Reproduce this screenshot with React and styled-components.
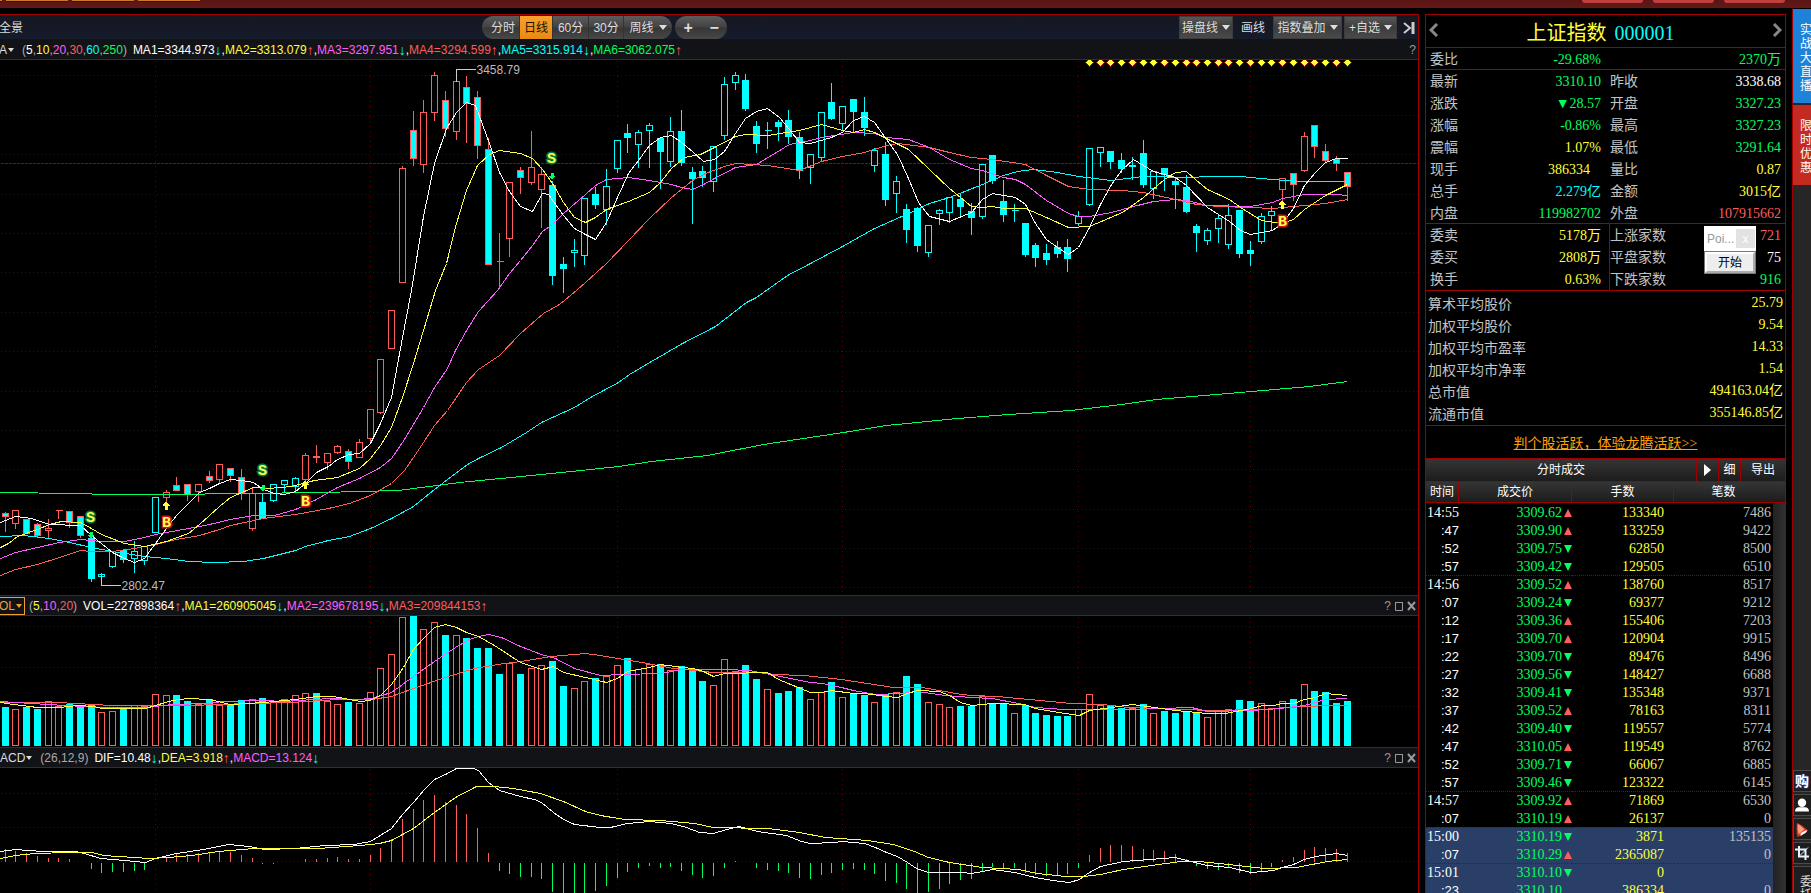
import React from 'react';
import styled, { createGlobalStyle, css } from 'styled-components';

const color = {
  up: '#ff5c5c',
  down: '#00ff5f',
  cyan: '#00ffff',
  yellow: '#ffff3c',
  magenta: '#ff5cff',
  white: '#ffffff',
  label: '#c4c4c4',
  line: '#a00000',
  grid: '#5e0000',
};

const sans = '"Liberation Sans", "Noto Sans CJK SC", sans-serif';
const serif = '"Liberation Serif", "Noto Sans CJK SC", serif';

const GlobalStyle = createGlobalStyle`
  * { box-sizing: border-box; }
  body { margin: 0; background: #000; overflow: hidden; }
  button { font: inherit; color: inherit; background: none; border: 0; padding: 0; margin: 0; cursor: pointer; }
`;

/* ---------- data ---------- */

// high, body top, body bottom, low, kind
// r: hollow red, m: red outline filled cyan, c: hollow cyan, f: solid cyan
const candles = [
  [511, 513, 516, 531, 'm'], [509, 510, 523, 528, 'r'], [519, 519, 533, 533, 'm'], [522, 524, 535, 537, 'm'],
  [518, 528, 530, 538, 'r'], [509, 510, 510, 518, 'r'], [511, 511, 522, 527, 'm'], [516, 516, 535, 537, 'm'],
  [535, 538, 578, 581, 'f'], [572, 574, 576, 585, 'c'], [551, 551, 566, 567, 'c'], [549, 550, 559, 562, 'f'],
  [540, 551, 558, 572, 'c'], [545, 546, 560, 564, 'c'], [496, 497, 532, 532, 'c'], [489, 492, 497, 501, 'r'],
  [476, 485, 490, 490, 'm'], [484, 484, 494, 500, 'm'], [484, 484, 491, 501, 'r'], [470, 476, 480, 482, 'm'],
  [464, 464, 479, 482, 'r'], [468, 468, 475, 481, 'm'], [468, 477, 493, 499, 'm'], [487, 493, 528, 530, 'r'],
  [492, 502, 518, 518, 'f'], [484, 484, 500, 501, 'c'], [480, 480, 484, 492, 'c'], [476, 478, 486, 491, 'c'],
  [452, 455, 479, 481, 'r'], [444, 456, 457, 462, 'r'], [453, 453, 462, 469, 'r'], [444, 446, 452, 453, 'r'],
  [448, 451, 461, 468, 'm'], [438, 442, 457, 457, 'r'], [409, 409, 438, 442, 'r'], [358, 359, 412, 413, 'r'],
  [310, 310, 348, 348, 'r'], [165, 168, 282, 282, 'r'], [110, 130, 158, 165, 'm'], [99, 112, 164, 172, 'r'],
  [71, 75, 112, 120, 'r'], [90, 100, 128, 136, 'm'], [69, 81, 131, 139, 'r'], [75, 87, 103, 142, 'm'],
  [90, 97, 145, 158, 'm'], [137, 149, 264, 264, 'm'], [232, 261, 261, 287, 'r'], [182, 182, 238, 256, 'r'],
  [166, 170, 177, 193, 'm'], [130, 167, 182, 184, 'r'], [166, 174, 189, 227, 'r'], [180, 185, 275, 284, 'f'],
  [256, 264, 268, 292, 'f'], [238, 250, 252, 266, 'c'], [198, 198, 255, 264, 'c'], [186, 194, 204, 208, 'f'],
  [168, 186, 209, 224, 'c'], [140, 140, 168, 172, 'c'], [123, 133, 137, 152, 'f'], [129, 132, 144, 167, 'c'],
  [122, 125, 130, 167, 'c'], [136, 138, 151, 188, 'f'], [116, 131, 161, 166, 'c'], [109, 131, 162, 165, 'f'],
  [166, 172, 178, 223, 'f'], [165, 171, 177, 186, 'f'], [146, 146, 181, 191, 'c'], [76, 84, 135, 139, 'c'],
  [71, 75, 82, 89, 'c'], [73, 80, 108, 110, 'f'], [120, 126, 143, 152, 'f'], [121, 130, 130, 148, 'f'],
  [119, 122, 126, 140, 'f'], [109, 120, 136, 143, 'f'], [131, 137, 170, 178, 'f'], [154, 154, 167, 183, 'c'],
  [111, 112, 157, 161, 'c'], [82, 102, 118, 119, 'f'], [106, 106, 123, 129, 'c'], [99, 99, 111, 132, 'f'],
  [96, 112, 127, 135, 'f'], [147, 150, 165, 171, 'c'], [141, 154, 199, 205, 'f'], [175, 181, 193, 212, 'c'],
  [203, 209, 229, 242, 'f'], [206, 208, 245, 251, 'f'], [224, 225, 252, 256, 'c'], [208, 210, 213, 224, 'c'],
  [196, 197, 212, 222, 'c'], [193, 199, 206, 216, 'f'], [202, 211, 217, 234, 'f'], [164, 164, 216, 218, 'c'],
  [155, 155, 180, 183, 'f'], [179, 201, 214, 221, 'f'], [203, 210, 210, 221, 'f'], [222, 223, 254, 256, 'f'],
  [242, 245, 257, 266, 'f'], [243, 253, 259, 264, 'f'], [240, 247, 253, 257, 'f'], [238, 247, 258, 271, 'f'],
  [210, 216, 223, 225, 'c'], [148, 148, 204, 205, 'c'], [146, 147, 152, 166, 'c'], [151, 151, 161, 168, 'f'],
  [152, 160, 168, 172, 'f'], [156, 165, 166, 179, 'f'], [139, 153, 184, 187, 'f'], [171, 171, 188, 198, 'c'],
  [168, 168, 174, 190, 'f'], [177, 181, 184, 208, 'f'], [174, 187, 211, 212, 'f'], [223, 226, 232, 251, 'f'],
  [227, 230, 240, 244, 'c'], [214, 218, 228, 242, 'c'], [203, 215, 244, 248, 'c'], [210, 210, 253, 257, 'f'],
  [240, 250, 253, 265, 'f'], [212, 216, 241, 243, 'c'], [205, 211, 215, 230, 'c'], [178, 178, 189, 200, 'r'],
  [173, 173, 184, 200, 'm'], [131, 136, 170, 171, 'r'], [125, 125, 146, 157, 'm'], [143, 151, 160, 161, 'm'],
  [155, 159, 163, 170, 'm'], [172, 172, 186, 200, 'm'],
];

// tops of the volume bars in thirds of a pixel; f marks a falling day
const volumes = `351f 358 351f 357f 334 349 342f 345f 345f 367 364 355f 346 347 313 316 315f 333f 343 328f 345 343f 331f 328
 324f 337 328 316 310 309f 334 343 336f 340 307 235 193 82 75f 118 97 135f 136 144f 174f 174f 252f 219 252f 235 226 213f
 288f 295 273 264f 259 226 204f 236 222 223f 241 228f 243f 273f 286 208 242 225f 267f 298 309f 303f 291f 328 306 276f
 322 312f 315f 337 312f 307 258f 282f 337 343 352 348f 348f 318 340f 340f 370 344f 369f 375f 378f 378f 358 313 346 348f
 354f 354 342f 370 363f 369f 365f 368f 382 364 358 330f 333f 340 355 334 327f 283 303f 306f 339f 333f`
  .split(/\s+/)
  .map((v) => ({ top: 590 + Math.round(parseInt(v, 10) / 3), falling: v.endsWith('f') }));

// ends of the MACD sticks in thirds of a pixel, 814 is the zero line
const macd = `775 780 786 795 801 801 804 814 834 846 843 843 840 837 814 798 789 788 786 784 780 783 792 801 819 819 814 814
 804 804 801 798 804 804 792 771 744 684 654 627 612 633 642 669 711 786 840 849 858 858 864 903 929 939 929 900 885 861
 843 831 825 831 828 840 852 861 855 831 810 814 831 837 840 846 861 864 852 846 837 834 837 849 870 876 894 906 903 894
 879 867 864 843 828 831 831 846 852 855 852 849 831 792 771 762 762 765 774 777 780 789 804 825 834 837 831 846 849 840
 828 807 798 777 768 771 774 786`
  .split(/\s+/)
  .map((v) => 590 + Math.round(parseInt(v, 10) / 3));

const priceLines = [
  [color.down, '0,492 75,493 107,494 166,494 321,492 398,490 459,482 541,474 590,469 618,466 651,461 707,455 763,444 843,432 886,425 957,418 1008,414 1070,410 1121,404 1156,399 1251,391 1309,386 1347,381'],
  [color.cyan, '0,536 23,535 49,538 69,542 91,547 112,551 144,556 166,558 188,561 214,562 243,561 263,558 295,550 305,546 328,540 349,536 370,528 391,518 413,506 434,489 455,473 467,464 478,458 501,447 526,432 541,422 574,407 590,397 618,382 629,374 651,361 682,343 715,326 746,302 756,297 787,275 810,263 842,246 874,228 908,213 929,203 949,197 982,184 1003,175 1017,171 1033,169 1057,172 1078,176 1111,180 1143,176 1191,177 1207,176 1240,176 1260,178 1297,181 1347,181'],
  [color.up, '0,575 15,569 37,564 59,557 80,550 91,551 112,551 134,548 155,544 176,539 199,535 219,529 230,525 263,518 295,514 328,508 349,503 370,495 391,483 404,470 413,457 423,442 434,425 447,410 466,382 478,369 499,355 520,333 543,313 559,304 576,290 585,282 606,263 628,240 649,218 671,197 692,180 705,173 724,166 735,163 767,165 799,170 821,161 842,156 864,152 886,145 897,143 929,147 949,152 971,157 992,159 1025,164 1046,175 1068,186 1089,189 1122,190 1143,192 1175,199 1196,204 1218,206 1250,207 1272,208 1304,205 1325,203 1347,199'],
  [color.magenta, '0,558 15,552 37,547 59,542 80,539 101,541 124,541 144,537 155,534 188,528 209,524 230,519 253,515 274,515 295,509 316,499 337,487 359,478 380,467 391,458 402,442 413,424 423,407 434,387 447,368 455,350 466,330 478,311 497,290 509,273 520,260 532,245 542,231 552,224 563,213 585,194 595,185 606,179 628,177 649,180 671,184 681,187 692,189 703,184 714,178 735,167 756,164 789,144 810,140 821,137 853,132 874,133 886,137 908,139 929,147 949,159 971,168 982,170 1003,177 1015,179 1025,184 1046,200 1068,213 1078,216 1089,216 1111,212 1133,206 1153,201 1175,199 1186,200 1207,205 1250,206 1272,202 1282,198 1304,194 1336,194 1347,195'],
  [color.yellow, '0,547 8,543 17,536 37,529 49,524 61,521 80,522 91,528 101,534 124,543 144,546 166,541 188,533 199,524 219,506 230,497 253,487 268,488 291,486 314,480 337,477 359,468 370,458 380,445 391,427 402,397 413,363 423,330 435,290 446,263 456,223 466,190 477,165 489,154 499,150 520,153 532,158 542,169 552,183 563,202 574,217 585,222 595,217 606,209 628,201 649,192 660,182 671,168 684,157 700,154 714,147 735,136 745,134 767,135 799,130 821,124 842,130 853,132 864,129 874,132 886,138 908,149 929,169 949,188 971,206 982,207 992,206 1003,208 1025,208 1046,217 1068,227 1089,226 1122,212 1143,197 1164,179 1175,172 1186,171 1196,180 1207,189 1229,199 1240,207 1261,220 1282,223 1293,219 1304,209 1325,195 1347,184'],
  [color.white, '0,522 15,516 31,518 49,524 80,525 91,535 112,552 124,558 134,562 144,558 155,543 166,528 176,515 188,503 199,492 209,488 219,483 230,479 241,480 253,482 263,489 274,493 284,494 295,491 305,483 316,472 328,466 337,459 349,454 359,453 370,443 380,423 391,397 402,337 411,290 423,216 434,163 446,128 456,112 466,102 475,105 489,143 499,172 509,191 520,206 532,211 542,193 548,194 563,215 574,228 585,234 595,239 606,222 617,197 628,173 638,160 649,145 660,137 671,135 681,142 692,151 703,161 714,159 724,151 735,133 745,118 756,111 767,108 779,117 789,129 799,142 810,143 831,137 842,132 853,120 864,116 874,122 886,139 897,154 908,178 918,202 929,216 949,221 971,212 982,199 992,193 1015,197 1025,204 1035,223 1046,239 1057,247 1068,254 1078,247 1089,227 1100,204 1111,184 1122,169 1133,159 1153,171 1175,177 1186,185 1207,207 1229,221 1240,230 1250,234 1261,232 1272,230 1282,223 1293,208 1304,185 1315,172 1325,162 1336,158 1347,158'],
];

const volumeLines = [
  [color.up, '0,702 57,702 111,705 188,705 249,703 291,702 337,699 371,699 391,696 413,688 445,677 474,668 497,664 520,661 551,656 585,653 600,655 617,658 647,663 673,668 713,672 762,672 773,674 804,675 841,679 893,687 922,687 961,694 971,695 997,696 1071,703 1102,704 1128,707 1186,709 1207,710 1262,709 1285,707 1327,705 1347,705'],
  [color.magenta, '0,701 31,703 65,705 101,707 145,707 172,704 207,703 222,701 264,700 283,701 329,698 356,699 371,698 391,692 413,676 434,661 455,647 469,639 478,636 488,634 501,637 520,646 541,654 555,658 574,668 600,675 621,674 660,673 682,669 705,669 726,669 749,670 780,676 810,682 822,683 841,687 853,690 875,694 901,693 917,691 945,695 971,697 992,698 1018,703 1035,707 1063,709 1132,709 1191,707 1207,711 1251,710 1280,708 1304,705 1325,699 1347,698'],
  [color.yellow, '0,702 13,704 37,707 59,707 77,705 94,706 101,708 145,708 155,705 172,700 188,698 209,699 230,704 263,702 295,699 316,696 333,696 360,701 369,700 380,695 391,684 403,667 413,649 424,637 434,627 445,624 456,627 466,632 478,636 494,645 520,662 541,669 553,666 563,672 585,677 606,682 617,678 627,671 649,667 660,664 682,667 693,668 703,671 713,676 724,673 767,672 778,679 810,692 821,692 831,690 853,693 864,693 886,696 897,697 907,693 917,690 939,691 949,695 960,702 971,705 992,703 1024,704 1035,708 1058,712 1079,715 1089,710 1111,707 1132,704 1154,707 1175,710 1207,713 1225,713 1251,708 1262,705 1273,705 1282,703 1293,703 1304,699 1315,697 1325,693 1347,695'],
];

const macdLines = [
  [color.white, '0,851 15,849 42,851 75,851 84,853 100,858 124,860 145,862 155,858 176,853 203,849 228,844 249,846 264,849 295,848 325,845 354,844 370,841 391,828 402,814 413,802 424,789 434,779 445,774 456,768 473,768 478,770 488,782 499,790 520,796 534,799 541,802 553,812 563,819 574,824 600,827 610,827 627,823 649,821 671,823 686,827 699,832 713,833 726,829 739,826 757,831 786,835 801,841 810,843 833,842 842,841 864,843 875,847 886,852 897,856 907,862 916,868 928,872 961,872 971,873 982,871 992,869 1014,872 1035,877 1052,880 1069,882 1079,879 1089,872 1100,866 1123,861 1149,859 1175,857 1194,862 1207,865 1229,867 1251,872 1273,870 1282,867 1293,864 1304,859 1315,856 1336,853 1347,855'],
  [color.yellow, '0,858 15,855 34,853 69,852 92,852 103,855 149,858 168,857 191,855 218,851 253,848 318,848 360,845 379,843 391,840 413,828 434,812 455,797 476,786 494,786 513,788 540,793 563,801 585,811 600,815 624,819 660,820 694,823 713,827 767,828 799,832 825,837 867,840 893,844 914,851 928,857 949,862 982,867 1018,869 1037,873 1065,876 1084,876 1100,874 1123,869 1144,866 1180,861 1199,861 1228,864 1264,868 1296,867 1327,861 1347,859'],
];

const monthMarks = [155, 370, 617, 842, 1078, 1250];

const quoteRows = [
  ['最新', '3310.10', 'down', '昨收', '3338.68', 'white'],
  ['涨跌', '▼28.57', 'down', '开盘', '3327.23', 'down'],
  ['涨幅', '-0.86%', 'down', '最高', '3327.23', 'down'],
  ['震幅', '1.07%', 'yellow', '最低', '3291.64', 'down'],
  ['现手', '386334', 'yellow', '量比', '0.87', 'yellow'],
  ['总手', '2.279亿', 'cyan', '金额', '3015亿', 'yellow'],
  ['内盘', '119982702', 'down', '外盘', '107915662', 'up'],
];

const breadthRows = [
  ['委卖', '5178万', 'yellow', '上涨家数', '721', 'up'],
  ['委买', '2808万', 'yellow', '平盘家数', '75', 'white'],
  ['换手', '0.63%', 'yellow', '下跌家数', '916', 'down'],
];

const averages = [
  ['算术平均股价', '25.79'],
  ['加权平均股价', '9.54'],
  ['加权平均市盈率', '14.33'],
  ['加权平均市净率', '1.54'],
  ['总市值', '494163.04亿'],
  ['流通市值', '355146.85亿'],
];

const ticks = [
  ['14:55', '3309.62', 'up', '133340', '7486'],
  [':47', '3309.90', 'up', '133259', '9422'],
  [':52', '3309.75', 'down', '62850', '8500'],
  [':57', '3309.42', 'down', '129505', '6510'],
  ['14:56', '3309.52', 'up', '138760', '8517'],
  [':07', '3309.24', 'down', '69377', '9212'],
  [':12', '3309.36', 'up', '155406', '7203'],
  [':17', '3309.70', 'up', '120904', '9915'],
  [':22', '3309.70', 'down', '89476', '8496'],
  [':27', '3309.56', 'down', '148427', '6688'],
  [':32', '3309.41', 'down', '135348', '9371'],
  [':37', '3309.52', 'up', '78163', '8311'],
  [':42', '3309.40', 'down', '119557', '5774'],
  [':47', '3310.05', 'up', '119549', '8762'],
  [':52', '3309.71', 'down', '66067', '6885'],
  [':57', '3309.46', 'down', '123322', '6145'],
  ['14:57', '3309.92', 'up', '71869', '6530'],
  [':07', '3310.19', 'up', '26137', '0'],
  ['15:00', '3310.19', 'down', '3871', '135135', true],
  [':07', '3310.29', 'up', '2365087', '0', true],
  ['15:01', '3310.10', 'down', '0', '', true],
  [':23', '3310.10', '', '386334', '0', true],
];

/* ---------- frame ---------- */

const Screen = styled.div`
  display: flex;
  flex-direction: column;
  height: 100vh;
  overflow: hidden;
  background: #000;
  font: 12px/16px ${sans};
  color: #ddd;
`;

const TopBar = styled.header`
  display: flex;
  align-items: flex-start;
  justify-content: space-between;
  flex: none;
  height: 8px;
  padding-right: 26px;
  background: linear-gradient(#5a1414, #641818);
  overflow: hidden;
`;

const TabStubs = styled.div`
  display: flex;
  gap: ${(p) => (p.$hot ? '10px' : '4px')};
`;

const TabStub = styled.span`
  width: ${(p) => (p.$short ? '2px' : '62px')};
  height: 2px;
  background: #c87a28;
  border-bottom: 1px solid #3a1408;
`;

const HotStub = styled.span`
  width: 61px;
  height: 3px;
  background: #c04040;
  border-radius: 0 0 3px 3px;
`;

const Workspace = styled.main`
  display: flex;
  flex: 1;
  min-height: 0;
`;

/* ---------- charts ---------- */

const ChartColumn = styled.section`
  display: flex;
  flex-direction: column;
  flex: 1;
  min-width: 0;
  margin: 6px 6px 0 0;
  border: solid ${color.line};
  border-width: 1px 1px 0 0;
  overflow: hidden;
`;

const Toolbar = styled.div`
  display: flex;
  align-items: center;
  flex: none;
  height: 24px;
  padding-top: 1px;
  background: linear-gradient(#161720, #151b2c);
  overflow: hidden;
`;

const ToolbarTitle = styled.div`
  width: 34%;
  text-indent: -1px;
  white-space: nowrap;
`;

const Pill = styled.div`
  display: flex;
  height: 23px;
  margin-right: 3px;
  border-radius: 12px;
  overflow: hidden;
  background: linear-gradient(#5c5c5c, #424242 48%, #363636 52%, #484848);
`;

const PeriodButton = styled.button`
  display: flex;
  align-items: center;
  justify-content: center;
  gap: 5px;
  width: ${(p) => p.$width}px;
  border-right: 1px solid #333;
  white-space: nowrap;
  &:last-child { border-right: 0; }
  &:first-child { padding-left: 5px; }
  ${(p) => p.$active && css`
    background: linear-gradient(#f9a02c, #e88a10);
    color: #1a1000;
  `}
`;

const ZoomButton = styled.button`
  width: 26px;
  font-weight: bold;
  font-size: 16px;
`;

const ToolbarRight = styled.div`
  display: flex;
  align-items: center;
  gap: 2px;
  margin-left: auto;
`;

const ToolButton = styled.button`
  display: flex;
  align-items: center;
  justify-content: center;
  gap: 4px;
  height: 23px;
  width: ${(p) => p.$width}px;
  white-space: nowrap;
  ${(p) => !p.$plain && css`
    border: 1px solid #3c3c3c;
    background: linear-gradient(#565656, #3c3c3c 50%, #4a4a4a);
  `}
`;

const Caret = styled.span`
  width: 0;
  border: ${(p) => (p.$small ? 3 : 4)}px solid transparent;
  border-top: ${(p) => (p.$small ? 4 : 5)}px solid currentColor;
  border-bottom: 0;
`;

const IndicatorBar = styled.div`
  display: flex;
  align-items: center;
  flex: none;
  height: 21px;
  padding-right: 2px;
  border-bottom: 1px solid ${color.line};
  ${(p) => (p.$divided ? css`border-top: 1px solid ${color.line};` : css`padding-top: 2px;`)}
  background: #121317;
  white-space: nowrap;
  overflow: hidden;
`;

const IndicatorName = styled.button`
  display: flex;
  align-items: center;
  gap: 1px;
  height: 18px;
  margin-left: ${(p) => p.$cut}px;
  margin-right: ${(p) => p.$gap}px;
  ${(p) => p.$active && css`
    padding: 0 2px 0 0;
    border: 1px solid #f0a030;
    color: #f0a030;
  `}
`;

const Params = styled.span`
  margin-right: 6px;
  color: #aaa;
`;

const Tint = styled.span`
  color: ${(p) => color[p.$c]};
`;

const Trend = styled.span`
  color: ${(p) => color[p.$c]};
  font: bold 14px/14px ${sans};
`;

const WindowTools = styled.div`
  display: flex;
  align-items: center;
  gap: 4px;
  margin-left: auto;
  color: #999;
`;

const WindowTool = styled.button`
  display: flex;
  line-height: 14px;
`;

const ChartSvg = styled.svg`
  display: block;
  flex: none;
  width: 100%;
  height: ${(p) => p.$height}px;
  background: #000;
  font: 12px ${sans};
`;

const barX = (i) => Math.floor(5.2 + 10.735 * i);

function Grid({ rows, top, bottom }) {
  return (
    <g stroke={color.grid} strokeDasharray="1 3">
      {rows.map((y) => <line key={y} x1="0" x2="100%" y1={y} y2={y} />)}
      {monthMarks.map((x) => <line key={x} x1={x} x2={x} y1={top} y2={bottom} strokeDasharray="1 4" />)}
    </g>
  );
}

function Lines({ items }) {
  return items.map(([stroke, points]) => (
    <polyline key={points} points={points} fill="none" stroke={stroke} />
  ));
}

function Candle({ i, data: [high, top, bottom, low, kind] }) {
  const x = barX(i);
  const stroke = kind === 'r' || kind === 'm' ? color.up : color.cyan;
  const fill = kind === 'm' || kind === 'f' ? color.cyan : '#000';
  return (
    <g stroke={stroke}>
      <line x1={x} x2={x} y1={high} y2={low} />
      {bottom - top < 1
        ? <line x1={x - 3} x2={x + 4} y1={top} y2={top} />
        : <rect x={x - 3} y={top} width="6" height={bottom - top} fill={fill} />}
    </g>
  );
}

const SignalText = styled.text`
  font: bold 15px "Liberation Mono", monospace;
  text-anchor: middle;
  paint-order: stroke;
  stroke-width: 3px;
`;

function SellSignal({ x, y }) {
  return (
    <g>
      <path d={`M${x - 1} ${y + 14}h3v3h2l-3.500 4l-3.500 -4h2z`} fill={color.down} />
      <SignalText x={x} y={y + 4} fill="#ffff50" stroke="#007a3c">S</SignalText>
    </g>
  );
}

function BuySignal({ x, y }) {
  return (
    <g>
      <path d={`M${x - 2} ${y - 13}h3v-4h2l-3.500 -4l-3.500 4h2z`} fill={color.yellow} />
      <SignalText x={x} y={y + 4} fill="#ffff50" stroke="#c81414">B</SignalText>
    </g>
  );
}

function PriceChart() {
  return (
    <ChartSvg $height={535} role="img" aria-label="日线">
      <g transform="translate(0.5 -59.5)" shapeRendering="crispEdges">
        <Grid rows={[75, 115, 154, 194, 233, 272, 312, 351, 391, 430, 469, 509, 548, 587]} top={60} bottom={595} />
        <line x1="0" x2="100%" y1="163" y2="163" stroke={color.line} strokeDasharray="3 1" />
        {candles.map((c, i) => <Candle key={i} i={i} data={c} />)}
        <Lines items={priceLines} />
        {Array.from({ length: 25 }, (_, n) => {
          const x = barX(101 + n);
          return <path key={n} d={`M${x} 58l4 4l-4 4l-4 -4z`} fill={color.yellow} stroke="#a01000" shapeRendering="auto" />;
        })}
        <path d="M456 81V69H475M101 574V585H120" fill="none" stroke="#ccc" />
        <text x="476" y="73" fill="#bbb">3458.79</text>
        <text x="121" y="589" fill="#bbb">2802.47</text>
        <SellSignal x={90} y={517} />
        <SellSignal x={262} y={470} />
        <SellSignal x={551} y={158} />
        <BuySignal x={166} y={522} />
        <BuySignal x={305} y={501} />
        <BuySignal x={1282} y={221} />
      </g>
    </ChartSvg>
  );
}

function VolumeChart() {
  return (
    <ChartSvg $height={131} role="img" aria-label="VOL">
      <g transform="translate(0.5 -615.5)" shapeRendering="crispEdges">
        <Grid rows={[626, 667, 706]} top={616} bottom={747} />
        {volumes.map((v, i) => (
          <rect
            key={i}
            x={barX(i) - 3}
            y={v.top}
            width="6"
            height={745 - v.top}
            fill={v.falling ? color.cyan : '#000'}
            stroke={v.falling ? color.cyan : color.up}
          />
        ))}
        <Lines items={volumeLines} />
      </g>
    </ChartSvg>
  );
}

function MacdChart() {
  return (
    <ChartSvg $height={125} role="img" aria-label="MACD">
      <g transform="translate(0.5 -767.5)" shapeRendering="crispEdges">
        <Grid rows={[793, 827, 861]} top={768} bottom={893} />
        {macd.map((y, i) => (y === 861 ? null : (
          <line
            key={i}
            x1={barX(i)}
            x2={barX(i)}
            y1={y < 861 ? y : 862}
            y2={y < 861 ? 861 : y}
            stroke={y < 861 ? color.up : color.down}
          />
        )))}
        <Lines items={macdLines} />
      </g>
    </ChartSvg>
  );
}

function Reading({ c, text, up, last }) {
  return (
    <>
      <Tint $c={c}>{text}</Tint>
      <Trend $c={up ? 'up' : 'cyan'}>{up ? '↑' : '↓'}</Trend>
      {!last && <Tint $c="white">,</Tint>}
    </>
  );
}

function PanelTools() {
  return (
    <WindowTools>
      <WindowTool aria-label="帮助">?</WindowTool>
      <WindowTool aria-label="最大化">
        <svg width="8" height="10"><path d="M0 1.500h8M0.500 1v8.500h7V1" fill="none" stroke="#999" /></svg>
      </WindowTool>
      <WindowTool aria-label="关闭">
        <svg width="9" height="10"><path d="M1 1l7 8M8 1l-7 8" stroke="#999" strokeWidth="2" /></svg>
      </WindowTool>
    </WindowTools>
  );
}

function Charts() {
  return (
    <ChartColumn>
      <Toolbar>
        <ToolbarTitle>全景</ToolbarTitle>
        <Pill>
          <PeriodButton $width={38}>分时</PeriodButton>
          <PeriodButton $width={33} $active>日线</PeriodButton>
          <PeriodButton $width={36}>60分</PeriodButton>
          <PeriodButton $width={35}>30分</PeriodButton>
          <PeriodButton $width={48}>周线<Caret /></PeriodButton>
        </Pill>
        <Pill>
          <ZoomButton aria-label="放大">+</ZoomButton>
          <ZoomButton aria-label="缩小">−</ZoomButton>
        </Pill>
        <ToolbarRight>
          <ToolButton $width={54}>操盘线<Caret /></ToolButton>
          <ToolButton $width={36} $plain>画线</ToolButton>
          <ToolButton $width={69}>指数叠加<Caret /></ToolButton>
          <ToolButton $width={53}>+自选<Caret /></ToolButton>
          <ToolButton $width={19} $plain aria-label="收起">
            <svg width="12" height="12"><path d="M1 1l6 5l-6 5" fill="none" stroke="#ccc" strokeWidth="2" /><path d="M10 0v12" stroke="#ccc" strokeWidth="3" /></svg>
          </ToolButton>
        </ToolbarRight>
      </Toolbar>

      <IndicatorBar>
        <IndicatorName $cut={-11} $gap={8}>MA<Caret $small /></IndicatorName>
        <Params>
          (<Tint $c="white">5</Tint>,<Tint $c="yellow">10</Tint>,<Tint $c="magenta">20</Tint>,<Tint $c="up">30</Tint>,
          <Tint $c="cyan">60</Tint>,<Tint $c="down">250</Tint>)
        </Params>
        <Reading c="white" text="MA1=3344.973" />
        <Reading c="yellow" text="MA2=3313.079" up />
        <Reading c="magenta" text="MA3=3297.951" />
        <Reading c="up" text="MA4=3294.599" up />
        <Reading c="cyan" text="MA5=3315.914" />
        <Reading c="down" text="MA6=3062.075" up last />
        <WindowTools><WindowTool aria-label="帮助">?</WindowTool></WindowTools>
      </IndicatorBar>
      <PriceChart />

      <IndicatorBar $divided>
        <IndicatorName $cut={-10} $gap={4} $active>VOL<Caret $small /></IndicatorName>
        <Params>
          (<Tint $c="yellow">5</Tint>,<Tint $c="magenta">10</Tint>,<Tint $c="up">20</Tint>)
        </Params>
        <Reading c="white" text="VOL=227898364" up />
        <Reading c="yellow" text="MA1=260905045" />
        <Reading c="magenta" text="MA2=239678195" />
        <Reading c="up" text="MA3=209844153" up last />
        <PanelTools />
      </IndicatorBar>
      <VolumeChart />

      <IndicatorBar $divided>
        <IndicatorName $cut={-10} $gap={8}>MACD<Caret $small /></IndicatorName>
        <Params>(26,12,9)</Params>
        <Reading c="white" text="DIF=10.48" />
        <Reading c="yellow" text="DEA=3.918" up />
        <Reading c="magenta" text="MACD=13.124" last />
        <PanelTools />
      </IndicatorBar>
      <MacdChart />
    </ChartColumn>
  );
}

/* ---------- quote panel ---------- */

const QuotePanel = styled.aside`
  position: relative;
  flex: none;
  width: 361px;
  height: max-content;
  margin: 6px 6px 0 0;
  border: 1px solid ${color.line};
  font: 14px/22px ${serif};
`;

const QuoteTitle = styled.div`
  display: flex;
  align-items: center;
  justify-content: space-between;
  height: 33px;
  padding: 3px 3px 0;
  border-bottom: 1px solid ${color.line};
`;

const StockName = styled.h1`
  display: flex;
  gap: 8px;
  margin: 0;
  padding-right: 10px;
  font: 20px/28px ${serif};
  color: ${color.yellow};
`;

const Block = styled.dl`
  margin: 0;
  padding: ${(p) => (p.$loose ? '2px 2px 0 2px' : '0 4px')};
  height: ${(p) => p.$height}px;
  border-bottom: 1px solid ${color.line};
`;

const QuoteRow = styled.div`
  display: grid;
  grid-template-columns: 35px 136px 1fr auto;
  height: 22px;
`;

const Label = styled.dt`
  color: ${color.label};
  line-height: 24px;
  white-space: nowrap;
  padding-left: ${(p) => (p.$second ? '9px' : '0')};
  ${(p) => p.$ruled && css`
    height: 22px;
    padding-left: 0;
    margin-left: 8px;
    border-left: 1px solid ${color.line};
  `}
`;

const Value = styled.dd`
  margin: 0;
  padding-right: ${(p) => (p.$inset ? '11px' : '0')};
  color: ${(p) => color[p.$c]};
  line-height: ${(p) => (p.$high ? '20px' : '23px')};
  text-align: right;
  white-space: nowrap;
`;

const AverageRow = styled.div`
  display: flex;
  justify-content: space-between;
  height: 22px;
`;

const Promo = styled.div`
  height: 33px;
  border-bottom: 1px solid ${color.line};
  line-height: 35px;
  text-align: center;
`;

const PromoLink = styled.a`
  color: #ffa200;
`;

const headFace = css`
  background: linear-gradient(#353535, #1c1c1c);
  color: #fff;
  font: 12px/22px ${sans};
`;

const TickTitle = styled.div`
  display: flex;
  height: 23px;
  border-bottom: 1px solid ${color.line};
  ${headFace}
`;

const TickHeading = styled.h2`
  flex: 1;
  margin: 0;
  font: inherit;
  text-align: center;
`;

const TickAction = styled.button`
  display: flex;
  align-items: center;
  justify-content: center;
  width: ${(p) => p.$width}px;
  border-left: 1px solid ${color.line};
`;

const TickTable = styled.table`
  width: 100%;
  table-layout: fixed;
  border-spacing: 0;
`;

const HeadCell = styled.th`
  height: 21px;
  padding: 0;
  border-bottom: 1px solid ${color.line};
  border-right: ${(p) => (p.$open ? '0' : `1px solid ${color.line}`)};
  ${headFace}
  line-height: 19px;
`;

const TickRow = styled.tr`
  background: ${(p) => (p.$selected ? '#293f68' : 'transparent')};
`;

const Cell = styled.td`
  height: 18px;
  padding: 0 ${(p) => p.$pad}px 0 0;
  border-top: ${(p) => (p.$first ? '1px dotted #8c0000' : '0')};
  color: ${(p) => color[p.$c]};
  font: ${(p) => (p.$plain ? `13px/17px ${sans}` : `14px/17px ${serif}`)};
  text-align: right;
  vertical-align: middle;
`;

const Gutter = styled.td`
  padding: 0;
  background: linear-gradient(90deg, #222, #303030);
`;

const Direction = styled.span`
  display: inline-block;
  width: 8px;
  margin-left: 2px;
  border: solid transparent;
  border-width: 0 4px;
  ${(p) => p.$dir === 'up' && css`border-bottom: 8px solid ${color.up};`}
  ${(p) => p.$dir === 'down' && css`border-top: 8px solid ${color.down};`}
`;

const FloatingWindow = styled.div`
  position: absolute;
  top: 211px;
  right: 29px;
  width: 52px;
  height: 48px;
  background: #777;
  font: 12px/22px ${sans};
`;

const FloatingTitle = styled.div`
  display: flex;
  align-items: center;
  justify-content: space-between;
  height: 25px;
  padding: 0 1px 0 3px;
  background: #fff;
  color: #999;
`;

const CloseButton = styled.button`
  width: 19px;
  height: 19px;
  background: #e2e2e2;
  color: #fff;
  line-height: 18px;
`;

const StartButton = styled.button`
  display: block;
  width: 50px;
  height: 21px;
  margin: 1px;
  border: 2px outset #fff;
  background: #eee;
  color: #000;
  line-height: 16px;
`;

function PairRow({ row: [l1, v1, c1, l2, v2, c2], ruled }) {
  return (
    <QuoteRow>
      <Label>{l1}</Label>
      <Value $c={c1} $inset={l1 === '现手'}>{v1}</Value>
      <Label $second $ruled={ruled}>{l2}</Label>
      <Value $c={c2}>{v2}</Value>
    </QuoteRow>
  );
}

function Quote() {
  return (
    <QuotePanel>
      <QuoteTitle>
        <button aria-label="上一个">
          <svg width="10" height="14"><path d="M8 1L2 7l6 6" fill="none" stroke="#888" strokeWidth="3" /></svg>
        </button>
        <StockName>上证指数<Tint $c="cyan">000001</Tint></StockName>
        <button aria-label="下一个">
          <svg width="10" height="14"><path d="M2 1l6 6l-6 6" fill="none" stroke="#888" strokeWidth="3" /></svg>
        </button>
      </QuoteTitle>
      <Block $height={22}>
        <PairRow row={['委比', '-29.68%', 'down', '', '2370万', 'down']} />
      </Block>
      <Block $height={154}>
        {quoteRows.map((r) => <PairRow key={r[0]} row={r} />)}
      </Block>
      <Block $height={67}>
        {breadthRows.map((r) => <PairRow key={r[0]} row={r} ruled />)}
      </Block>
      <Block $height={135} $loose>
        {averages.map(([label, value]) => (
          <AverageRow key={label}>
            <Label>{label}</Label>
            <Value $c="yellow" $high>{value}</Value>
          </AverageRow>
        ))}
      </Block>
      <Promo><PromoLink href="#active">判个股活跃，体验龙腾活跃&gt;&gt;</PromoLink></Promo>

      <TickTitle>
        <TickHeading>分时成交</TickHeading>
        <TickAction $width={22} aria-label="播放">
          <svg width="7" height="12"><path d="M0 0l7 6l-7 6z" fill="#fff" /></svg>
        </TickAction>
        <TickAction $width={22}>细</TickAction>
        <TickAction $width={45}>导出</TickAction>
      </TickTitle>
      <TickTable>
        <colgroup>
          <col width="33" /><col width="113" /><col width="102" /><col /><col width="12" />
        </colgroup>
        <thead>
          <tr>
            <HeadCell>时间</HeadCell>
            <HeadCell>成交价</HeadCell>
            <HeadCell>手数</HeadCell>
            <HeadCell $open>笔数</HeadCell>
            <HeadCell $open as="td" />
          </tr>
        </thead>
        <tbody>
          {ticks.map(([time, price, dir, lots, count, selected], i) => {
            const first = i > 0 && time.length === 5;
            return (
              <TickRow key={i} $selected={selected}>
                <Cell $c="white" $pad={0} $plain={time.length < 5} $first={first}>{time}</Cell>
                <Cell $c="down" $pad={0} $first={first}>{price}<Direction $dir={dir} /></Cell>
                <Cell $c="yellow" $pad={10} $first={first}>{lots}</Cell>
                <Cell $c="label" $pad={2} $first={first}>{count}</Cell>
                {i === 0 && <Gutter rowSpan={ticks.length} />}
              </TickRow>
            );
          })}
        </tbody>
      </TickTable>

      <FloatingWindow>
        <FloatingTitle>Poi...<CloseButton aria-label="关闭">x</CloseButton></FloatingTitle>
        <StartButton>开始</StartButton>
      </FloatingWindow>
    </QuotePanel>
  );
}

/* ---------- right strip ---------- */

const Strip = styled.nav`
  display: flex;
  flex-direction: column;
  flex: none;
  width: 19px;
  margin-top: 1px;
  border-left: 1px solid ${color.line};
  background: #262626;
  overflow: hidden;
`;

const Banner = styled.a`
  flex: none;
  width: 26px;
  height: ${(p) => p.$height}px;
  margin-bottom: 2px;
  padding: 14px 7px 0;
  background: ${(p) => p.$bg};
  color: #fff;
  font: 12px/14px ${sans};
  text-decoration: none;
  word-break: break-all;
`;

const StripTools = styled.div`
  display: flex;
  flex-direction: column;
  gap: 2px;
  height: 123px;
  margin-top: auto;
`;

const StripButton = styled.button`
  display: flex;
  align-items: center;
  justify-content: flex-start;
  flex: none;
  width: 26px;
  height: ${(p) => (p.$tall ? '60px' : '22px')};
  padding-left: 1px;
  border: 1px solid #4a4a4a;
  background: #1e1e1e;
  ${(p) => p.$tall && css`
    align-items: flex-start;
    padding: 9px 3px;
    word-break: break-all;
    font-size: 12px;
    line-height: 13px;
  `}
`;

const BuyGlyph = styled.span`
  font: bold 14px/20px ${sans};
  color: #fff;
  text-shadow: 0 0 2px #4060ff;
`;

function RightStrip() {
  return (
    <Strip>
      <Banner href="#live" $height={94} $bg="#1e82d8">实战大直播</Banner>
      <Banner href="#sale" $height={80} $bg="#c42a22">限时优惠</Banner>
      <StripTools>
        <StripButton><BuyGlyph>购</BuyGlyph></StripButton>
        <StripButton aria-label="用户">
          <svg width="14" height="15" viewBox="0 0 15 16"><circle cx="7.500" cy="5" r="4.500" fill="#fff" /><path d="M0 14.500c0-3 2-4.500 4-4.500h7c2 0 4 1.500 4 4.500z" fill="#fff" /></svg>
        </StripButton>
        <StripButton aria-label="提醒">
          <svg width="14" height="15" viewBox="0 0 15 16"><path d="M2 1q4 1 12 8l-3 3l-8 4q-2-2-1-15z" fill="#e03418" /><path d="M3 2q4 2 7 6l-6 5q-2-5-1-11z" fill="#ff9c84" /><path d="M6 12l5-3l2 0l-1 2l-6 4z" fill="#fff" /></svg>
        </StripButton>
        <StripButton aria-label="截图">
          <svg width="14" height="14" viewBox="0 0 14 14" fill="none" stroke="#e8f2ff" strokeWidth="2"><path d="M4 0v10.500h10M0 3.500h10.500V14" /><path d="M5 9.500l8-8" strokeWidth="1" /></svg>
        </StripButton>
        <StripButton $tall>委托</StripButton>
      </StripTools>
    </Strip>
  );
}

export default function App() {
  return (
    <Screen>
      <GlobalStyle />
      <TopBar>
        <TabStubs>
          <TabStub $short /><TabStub /><TabStub /><TabStub />
        </TabStubs>
        <TabStubs $hot>
          <HotStub /><HotStub /><HotStub />
        </TabStubs>
      </TopBar>
      <Workspace>
        <Charts />
        <Quote />
        <RightStrip />
      </Workspace>
    </Screen>
  );
}
